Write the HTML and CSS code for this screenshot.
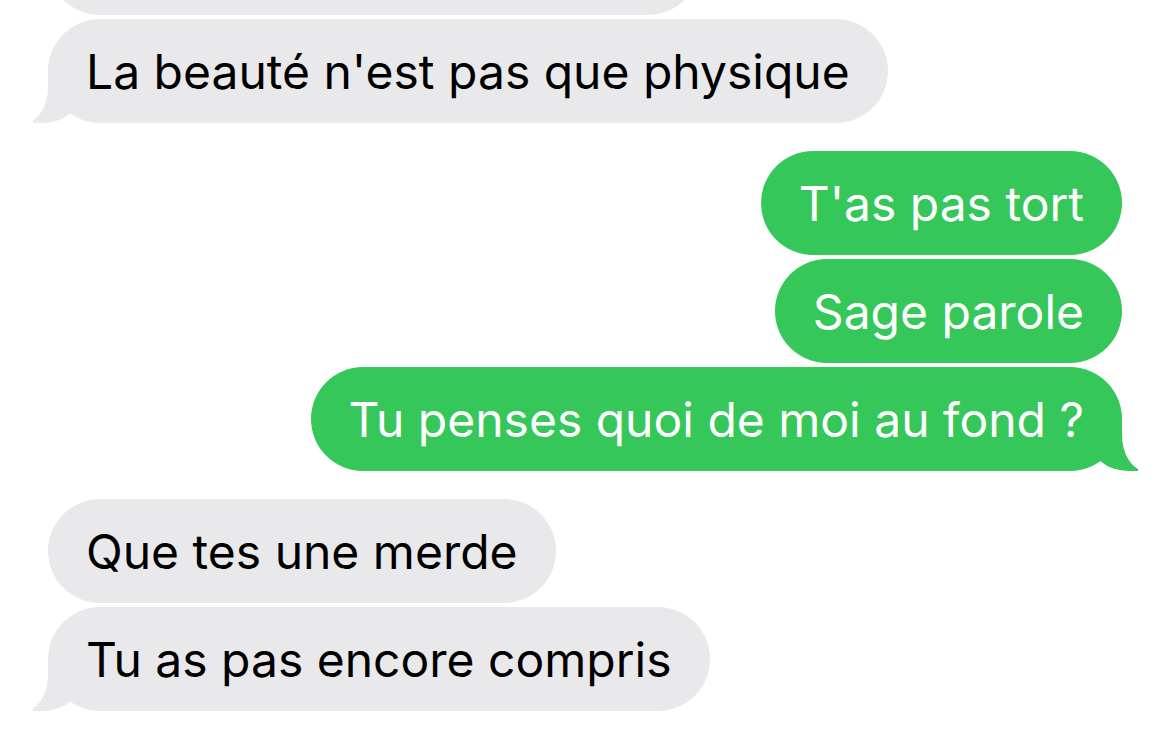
FILE: index.html
```html
<!DOCTYPE html>
<html lang="fr">
<head>
    <meta charset="UTF-8">
    <meta name="viewport" content="width=device-width, initial-scale=1.0">
    <title>Messages</title>
    <link rel="stylesheet" href="styles.css">
</head>
<body>
    <div class="thread">
        <div class="group them">
            <div class="bubble cut"></div>
            <div class="bubble tail">La beauté n'est pas que physique</div>
        </div>
        <div class="group me">
            <div class="bubble">T'as pas tort</div>
            <div class="bubble">Sage parole</div>
            <div class="bubble tail">Tu penses quoi de moi au fond ?</div>
        </div>
        <div class="group them">
            <div class="bubble">Que tes une merde</div>
            <div class="bubble tail">Tu as pas encore compris</div>
        </div>
    </div>
</body>
</html>
```

FILE: styles.css
```css
 body {
     margin: 0;
     background-color: #fff;
     font-family: Inter, "Noto Sans", sans-serif;
     overflow: hidden;
 }

.thread {
     display: flex;
     flex-direction: column;
     gap: 28px;
     margin-top: -89px;
     padding: 0 48px;
 }

.group {
     display: flex;
     flex-direction: column;
     gap: 4px;
 }

.group.them {
     align-items: flex-start;
 }

.group.me {
     align-items: flex-end;
 }

.bubble {
     position: relative;
     box-sizing: border-box;
     height: 104px;
     padding: 0 38px;
     border-radius: 52px;
     font-size: 48px;
     line-height: 105px;
     white-space: nowrap;
 }

.them .bubble {
     background-color: #e9e9eb;
     color: #000;
 }

.me .bubble {
     background-color: #35c759;
     color: #fff;
 }

.bubble.cut {
     width: 652px;
 }

/* the little tail under the last bubble of a group */
.bubble.tail::before,
.bubble.tail::after {
     content: '';
     position: absolute;
     bottom: 0;
     height: 52px;
 }

.them .bubble.tail::before {
     left: -15px;
     width: 48px;
     background-color: #e9e9eb;
     border-bottom-right-radius: 38px 32px;
 }

.them .bubble.tail::after {
     left: -60px;
     width: 60px;
     background-color: #fff;
     border-bottom-right-radius: 24px 36px;
 }

.me .bubble.tail::before {
     right: -16px;
     width: 48px;
     background-color: #35c759;
     border-bottom-left-radius: 38px 32px;
 }

.me .bubble.tail::after {
     right: -60px;
     width: 60px;
     background-color: #fff;
     border-bottom-left-radius: 24px 36px;
 }
```
